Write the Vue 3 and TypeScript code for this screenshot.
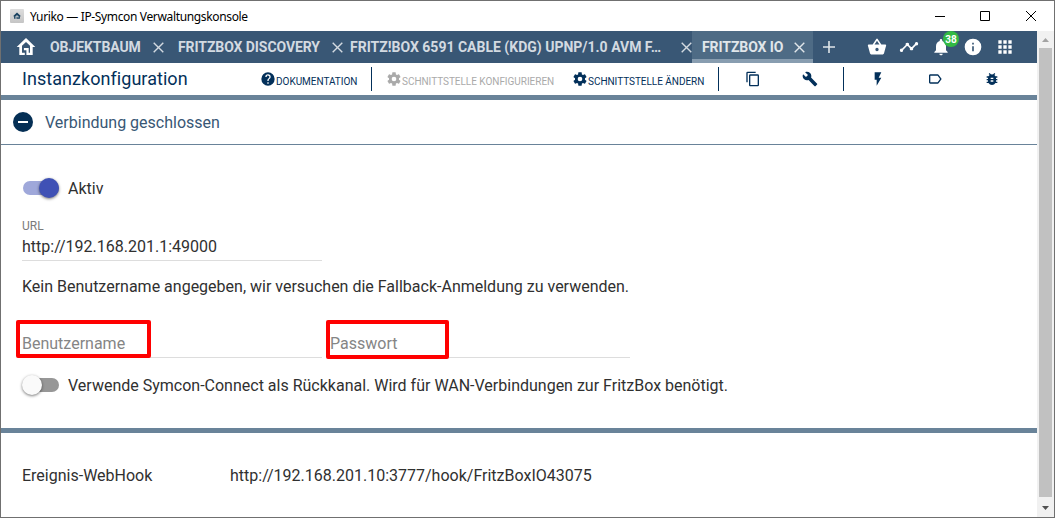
<script setup lang="ts">
interface Tab { label: string; kind: string }
interface Tool { kind: string; path: string }

const tabs: Tab[] = [
  { label: 'OBJEKTBAUM', kind: 'objects' },
  { label: 'FRITZBOX DISCOVERY', kind: 'discovery' },
  { label: 'FRITZ!BOX 6591 CABLE (KDG) UPNP/1.0 AVM F…', kind: 'cable' },
  { label: 'FRITZBOX IO', kind: 'active' },
]

const actions: Tool[] = [
  { kind: 'basket', path: 'M17.21 9l-4.38-6.56a1 1 0 0 0-1.66 0L6.79 9H2c-.55 0-1 .45-1 1l.04.27 2.54 9.27C3.81 20.38 4.58 21 5.5 21h13c.92 0 1.69-.62 1.93-1.46l2.54-9.27L23 10c0-.55-.45-1-1-1h-4.79zM9 9l3-4.4L15 9H9zm3 8a2 2 0 1 1 0-4 2 2 0 0 1 0 4z' },
  { kind: 'trend', path: 'M23 8a2 2 0 0 1-2.51 1.93l-3.56 3.55a2 2 0 1 1-3.86 0l-2.55-2.55a2 2 0 0 1-1.04 0l-4.55 4.56A2 2 0 1 1 3.51 14.07l4.56-4.55a2 2 0 1 1 3.86 0l2.55 2.55a2 2 0 0 1 1.04 0l3.55-3.56A2 2 0 1 1 23 8z' },
  { kind: 'bell', path: 'M12 22c1.1 0 2-.9 2-2h-4a2 2 0 0 0 2 2zm6-6v-5c0-3.07-1.64-5.64-4.5-6.32V4a1.5 1.5 0 0 0-3 0v.68C7.63 5.36 6 7.92 6 11v5l-2 2v1h16v-1l-2-2z' },
  { kind: 'info', path: 'M12 2a10 10 0 1 0 0 20 10 10 0 0 0 0-20zm1 15h-2v-6h2v6zm0-8h-2V7h2v2z' },
  { kind: 'grid', path: 'M4 4h4v4H4zM10 4h4v4h-4zM16 4h4v4h-4zM4 10h4v4H4zM10 10h4v4h-4zM16 10h4v4h-4zM4 16h4v4H4zM10 16h4v4h-4zM16 16h4v4h-4z' },
]

const gear = 'M19.43 12.98c.04-.32.07-.64.07-.98s-.03-.66-.07-.98l2.11-1.65c.19-.15.24-.42.12-.64l-2-3.46c-.12-.22-.39-.3-.61-.22l-2.49 1c-.52-.4-1.08-.73-1.69-.98l-.38-2.65C14.46 2.18 14.25 2 14 2h-4c-.25 0-.46.18-.49.42l-.38 2.65c-.61.25-1.17.59-1.69.98l-2.49-1c-.23-.09-.49 0-.61.22l-2 3.46c-.13.22-.07.49.12.64l2.11 1.65c-.04.32-.07.65-.07.98s.03.66.07.98l-2.11 1.65c-.19.15-.24.42-.12.64l2 3.46c.12.22.39.3.61.22l2.49-1c.52.4 1.08.73 1.69.98l.38 2.65c.03.24.24.42.49.42h4c.25 0 .46-.18.49-.42l.38-2.65c.61-.25 1.17-.59 1.69-.98l2.49 1c.23.09.49 0 .61-.22l2-3.46c.12-.22.07-.49-.12-.64l-2.11-1.65zM12 15.5a3.5 3.5 0 1 1 0-7 3.5 3.5 0 0 1 0 7z'
const help = 'M12 2a10 10 0 1 0 0 20 10 10 0 0 0 0-20zm1 17h-2v-2h2v2zm2.07-7.75l-.9.92C13.45 12.9 13 13.5 13 15h-2v-.5c0-1.1.45-2.1 1.17-2.83l1.24-1.26A2 2 0 1 0 10 9H8a4 4 0 0 1 8 0c0 .88-.36 1.68-.93 2.25z'

const tools: Tool[] = [
  { kind: 'copy', path: 'M16 1H4a2 2 0 0 0-2 2v14h2V3h12V1zm3 4H8a2 2 0 0 0-2 2v14c0 1.1.9 2 2 2h11a2 2 0 0 0 2-2V7a2 2 0 0 0-2-2zm0 16H8V7h11v14z' },
  { kind: 'wrench', path: 'M22.7 19l-9.1-9.1c.9-2.3.4-5-1.5-6.9-2-2-5-2.4-7.4-1.3L9 6 6 9 1.6 4.7C.4 7.1.9 10.1 2.9 12.1c1.9 1.9 4.6 2.4 6.9 1.5l9.1 9.1c.4.4 1 .4 1.4 0l2.3-2.3c.5-.4.5-1.1.1-1.4z' },
]
const debugTools: Tool[] = [
  { kind: 'bolt', path: 'M7 2v11h3v9l7-12h-4l4-8z' },
  { kind: 'label', path: 'M17.63 5.84C17.27 5.33 16.67 5 16 5L5 5.01C3.9 5.01 3 5.9 3 7v10c0 1.1.9 1.99 2 1.99L16 19c.67 0 1.27-.33 1.63-.84L22 12l-4.37-6.16zM16 17H5V7h11l3.55 5L16 17z' },
  { kind: 'bug', path: 'M20 8h-2.81a6 6 0 0 0-1.82-1.96L17 4.41 15.59 3l-2.17 2.17a6 6 0 0 0-2.84 0L8.41 3 7 4.41l1.62 1.63C7.88 6.55 7.26 7.22 6.81 8H4v2h2.09c-.05.33-.09.66-.09 1v1H4v2h2v1c0 .34.04.67.09 1H4v2h2.81a6 6 0 0 0 10.38 0H20v-2h-2.09c.05-.33.09-.66.09-1v-1h2v-2h-2v-1c0-.34-.04-.67-.09-1H20V8zm-6 8h-4v-2h4v2zm0-4h-4v-2h4v2z' },
]
</script>

<template>
  <div class="window">
    <header class="titlebar">
      <span class="app-icon"><svg viewBox="0 0 14 14"><path d="M3 7.2L7 3.6l4 3.6H9.9v2.6H4.1V7.2z" /><path class="door" d="M6 9.8V7.1h2v1.5" /></svg></span>
      <span class="window-title">Yuriko — IP-Symcon Verwaltungskonsole</span>
      <svg class="controls" viewBox="0 0 112 14">
        <path d="M5 7.500h10M50.500 2.500h9v9h-9z" /><path d="M96 2l10 10M106 2l-10 10" />
      </svg>
    </header>

    <div class="workspace">
      <div class="content">
        <nav class="tabs">
          <svg class="home" viewBox="0 0 20 20"><path d="M10 1L.7 10H3.300v8h5.500v-2.300H6V8.800l4-3.700 4 3.700v6.900h-1.300V11H7.900v2.200h2.500V18h6.300v-8h2.600z" /></svg>
          <div v-for="tab in tabs" :key="tab.kind" class="tab" :class="tab.kind">
            <span class="tab-label">{{ tab.label }}</span>
            <svg class="close" viewBox="0 0 11 11"><path d="M.7.7l9.600 9.600M10.300.7L.7 10.300" /></svg>
          </div>
          <svg class="plus" viewBox="0 0 12 12"><path d="M6 0v12M0 6h12" /></svg>
          <div class="actions">
            <span v-for="item in actions" :key="item.kind" class="action">
              <svg viewBox="0 0 24 24"><path :d="item.path" /></svg>
              <b v-if="item.kind === 'bell'" class="badge">38</b>
            </span>
          </div>
        </nav>

        <section class="toolbar">
          <h1>Instanzkonfiguration</h1>
          <div class="command docs"><svg viewBox="0 0 24 24"><path :d="help" /></svg><span>DOKUMENTATION</span></div>
          <i class="divider" />
          <div class="command configure"><svg viewBox="0 0 24 24"><path :d="gear" /></svg><span>SCHNITTSTELLE KONFIGURIEREN</span></div>
          <div class="command change"><svg viewBox="0 0 24 24"><path :d="gear" /></svg><span>SCHNITTSTELLE ÄNDERN</span></div>
          <i class="divider" />
          <div class="tool-group"><svg v-for="t in tools" :key="t.kind" viewBox="0 0 24 24"><path :d="t.path" /></svg></div>
          <i class="divider" />
          <div class="tool-group debug"><svg v-for="t in debugTools" :key="t.kind" viewBox="0 0 24 24"><path :d="t.path" /></svg></div>
        </section>

        <section class="status">
          <span class="minus" /><span class="status-text">Verbindung geschlossen</span>
        </section>

        <main class="form">
          <div class="switch-row"><span class="switch on"><i /></span><span class="switch-label">Aktiv</span></div>
          <div class="field url"><label>URL</label><span>http://192.168.201.1:49000</span></div>
          <p class="message">Kein Benutzername angegeben, wir versuchen die Fallback-Anmeldung zu verwenden.</p>
          <div class="credentials">
            <div class="field"><span>Benutzername</span><i class="mark user-mark" /></div>
            <div class="field"><span>Passwort</span><i class="mark pass-mark" /></div>
          </div>
          <div class="switch-row connect"><span class="switch"><i /></span><span class="switch-label">Verwende Symcon-Connect als Rückkanal. Wird für WAN-Verbindungen zur FritzBox benötigt.</span></div>
        </main>

        <footer class="hook"><span class="hook-label">Ereignis-WebHook</span><span>http://192.168.201.10:3777/hook/FritzBoxIO43075</span></footer>
      </div>
      <aside class="scrollbar">
        <svg viewBox="0 0 17 17"><path fill="#a3a3a3" d="M5 11l3.500-4L12 11z" /></svg>
        <i class="thumb" />
        <svg viewBox="0 0 17 17"><path fill="#505050" d="M5 6h7l-3.500 4z" /></svg>
      </aside>
    </div>
  </div>
</template>

<style>
body { margin: 0; overflow: hidden; }
</style>

<style scoped>
* { box-sizing: border-box; }
.window { width: 1055px; height: 518px; border: 1px solid #707070; background: #fff; font-family: Roboto, sans-serif; color: #303030; display: flex; flex-direction: column; }
svg { display: block; flex: none; fill: currentColor; }
span, label { white-space: nowrap; }
.titlebar { height: 30px; flex: none; display: flex; align-items: center; padding-left: 9px; }
.app-icon { width: 14px; height: 14px; background: linear-gradient(#ddd, #c5c5c5); border-radius: 1px; }
.app-icon path { fill: #18415f; }
.app-icon .door { fill: none; stroke: #ddd; }
.window-title { margin-left: 6px; font: 12px "Noto Sans", sans-serif; letter-spacing: -.35px; color: #000; }
.controls { width: 112px; height: 14px; margin-left: auto; margin-right: 12px; margin-top: -1px; fill: none; stroke: #000; }
.workspace { height: 486px; display: flex; }
.content { width: 1036px; display: flex; flex-direction: column; }
.tabs { height: 32px; flex: none; background: #395775; color: #fff; display: flex; align-items: center; }
.home { width: 20px; height: 20px; margin: 0 4px 0 15px; }
.tab { height: 32px; display: flex; align-items: center; justify-content: space-between; padding-left: 10px; color: #d3dae1; flex: none; }
.objects { width: 128px; padding-right: 4px; }
.discovery { width: 175px; }
.cable { width: 349px; padding: 0 0 0 7px; }
.active { width: 121px; padding-right: 8px; background: #4e6b85; border-bottom: 4px solid #889db0; padding-top: 4px; color: #e0e6ea; }
.tab-label { font-size: 14px; font-weight: 700; line-height: 32px; letter-spacing: -.08px; }
.cable .tab-label { letter-spacing: 0; }
.close { width: 11px; height: 11px; fill: none; stroke: currentColor; stroke-width: 1.4; }
.plus { width: 12px; height: 12px; margin-left: 10px; stroke: #dfe5e9; stroke-width: 1.6; }
.actions { display: flex; margin-left: auto; margin-right: 16px; }
.action { position: relative; width: 32px; display: flex; justify-content: center; }
.action svg { width: 20px; height: 20px; }
.badge { position: absolute; left: 18px; top: -6px; width: 16px; height: 16px; border-radius: 50%; background: #32b944; font-size: 10px; line-height: 17px; text-align: center; }
.toolbar { height: 37px; flex: none; border-bottom: 5px solid #698399; display: flex; align-items: center; padding-left: 21px; color: #03305a; }
h1 { width: 238px; margin: 0; font-size: 18px; line-height: 32px; font-weight: 400; letter-spacing: .05px; }
.command { display: flex; align-items: center; font-size: 10px; }
.command svg { width: 16px; height: 16px; }
.command span { padding-top: 5px; line-height: 16px; height: 20px; letter-spacing: -.03px; }
.docs { width: 111px; }
.divider { width: 1px; height: 24px; background: #03305a; flex: none; }
.configure { width: 186px; margin-left: 14px; color: #aaa; }
.change { width: 146px; }
.tool-group { display: flex; gap: 41px; width: 124px; padding-left: 26px; }
.tool-group svg { width: 16px; height: 16px; }
.debug { width: 192px; }
.status { height: 45px; flex: none; border-bottom: 1px solid #698399; display: flex; align-items: center; padding-left: 12px; color: #385775; }
.minus { width: 20px; height: 20px; border-radius: 50%; background: #052f55; display: flex; align-items: center; justify-content: center; }
.minus::before { content: ""; width: 10px; height: 2px; background: #fff; }
.status-text { margin-left: 12px; font-size: 16px; padding-top: 1px; }
.form { height: 288px; flex: none; padding: 31px 21px 0; border-bottom: 5px solid #698399; font-size: 16px; line-height: 20px; }
.switch-row { height: 24px; display: flex; align-items: center; }
.switch { position: relative; width: 36px; height: 14px; border-radius: 7px; background: #979797; margin: 0 9px 0 1px; }
.switch i { position: absolute; left: -1px; top: -3px; width: 20px; height: 20px; border-radius: 50%; background: #fafafa; box-shadow: 0 1px 3px #0008; }
.switch.on { background: #9fa8da; }
.switch.on i { left: 16px; background: #3f51b5; }
.switch-label { padding-top: 1px; }
.field { position: relative; width: 300px; border-bottom: 1px solid #ddd; }
.url { height: 46px; margin-top: 15px; }
.url label { display: block; font-size: 12px; line-height: 16px; padding-top: 3px; color: #7b7b7b; }
.url span { display: block; margin-top: 3px; line-height: 20px; }
.message { margin: 16px 0 0; line-height: 20px; }
.credentials { display: flex; gap: 8px; margin-top: 25px; }
.credentials .field { height: 36px; padding-top: 12px; color: #858585; }
.mark { position: absolute; border: 4px solid #f00; border-radius: 2px; }
.user-mark { left: -6px; top: -2px; width: 135px; height: 38px; }
.pass-mark { left: -4px; top: -2px; width: 123px; height: 39px; }
.connect { margin-top: 15px; }
.hook { height: 84px; display: flex; align-items: center; padding-left: 21px; font-size: 16px; }
.hook-label { width: 208px; }
.scrollbar { width: 17px; height: 486px; background: #f1f1f1; display: flex; flex-direction: column; }
.scrollbar svg { width: 17px; height: 17px; }
.thumb { width: 13px; flex: 1; margin: 0 2px 3px; background: #c1c1c1; }
</style>
